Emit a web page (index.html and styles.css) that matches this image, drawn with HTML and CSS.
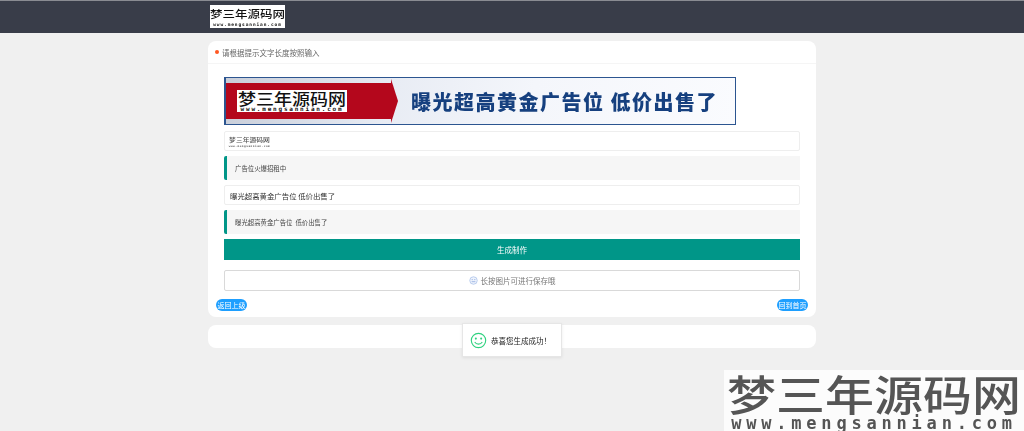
FILE: index.html
```html
<!DOCTYPE html>
<html lang="zh">
<head>
<meta charset="utf-8">
<title>梦三年源码网</title>
<link rel="stylesheet" href="styles.css">
</head>
<body>
<header class="topbar">
  <div class="wrap">
    <div class="logo logo-top"><span class="logo-cn">梦三年源码网</span><span class="logo-en">www.mengsannian.com</span></div>
  </div>
</header>
<main class="wrap content">
  <section class="card">
    <div class="card-head"><i class="dot"></i>请根据提示文字长度按照输入</div>
    <div class="card-body">
      <div class="banner">
        <div class="ribbon">
          <div class="logo logo-banner"><span class="logo-cn">梦三年源码网</span><span class="logo-en">www.mengsannian.com</span></div>
          <svg class="ribbon-tip" viewBox="0 0 7 44" preserveAspectRatio="none"><polygon points="0,0 7,22 0,44" fill="#b4071c"/></svg>
        </div>
        <div class="slogan">曝光超高黄金广告位 低价出售了</div>
      </div>
      <div class="input">
        <div class="logo logo-field"><span class="logo-cn">梦三年源码网</span><span class="logo-en">www.mengsannian.com</span></div>
      </div>
      <div class="quote">广告位火爆招租中</div>
      <div class="input">曝光超高黄金广告位 低价出售了</div>
      <div class="quote">曝光超高黄金广告位&nbsp; 低价出售了</div>
      <button class="btn-primary">生成制作</button>
      <div class="btn-outline">
        <svg class="smile-sm" viewBox="0 0 12 12"><circle cx="6" cy="6" r="5" fill="#eef3fc" stroke="#a9c0ea"/><circle cx="4.200" cy="4.800" r=".7" fill="#8aa6dd"/><circle cx="7.800" cy="4.800" r=".7" fill="#8aa6dd"/><path d="M3.500 7.600h5" stroke="#8aa6dd" fill="none"/></svg>
        长按图片可进行保存哦
      </div>
    </div>
    <div class="pills"><a class="pill">返回上级</a><a class="pill">回到首页</a></div>
  </section>
  <section class="card card-empty"></section>
</main>
<div class="toast">
  <svg class="smile" viewBox="0 0 18 18"><circle cx="9" cy="9" r="7.600" fill="none" stroke="#2fd17f" stroke-width="1.200"/><circle cx="6.200" cy="7" r="1.100" fill="#2fd17f"/><circle cx="11.800" cy="7" r="1.100" fill="#2fd17f"/><path d="M5 10.600c1.800 3 6.200 3 8 0" fill="none" stroke="#2fd17f" stroke-width="1.200"/></svg>
  <span>恭喜您生成成功！</span>
</div>
<div class="logo watermark"><span class="logo-cn">梦三年源码网</span><span class="logo-en">www.mengsannian.com</span></div>
</body>
</html>
```

FILE: styles.css
```css
* { box-sizing: border-box; }
html, body { margin: 0; height: 431px; overflow: hidden; }
body {
  background: #f0f0f0;
  font-family: "Noto Sans CJK SC", "Liberation Sans", sans-serif;
  font-size: 7px;
  color: #444;
  filter: blur(.3px);
}
.wrap { width: 608px; margin-left: 208px; }
.topbar { height: 33px; background: #393d49; border-top: 1px solid #8a8c92; }
.topbar .wrap { padding: 4px 0 0 2px; }
.logo { display: flex; flex-direction: column; align-items: center; background: #fff; color: #111; }
.logo-cn { display: block; white-space: nowrap; font-weight: 500; transform: scaleY(.86); }
.logo-en { display: block; white-space: nowrap; font-family: "DejaVu Sans Mono", monospace; font-weight: 700; }
.logo-top { width: 75px; height: 23px; }
.logo-top .logo-cn { font-size: 12.500px; line-height: 17px; }
.logo-top .logo-en { font-size: 4.500px; line-height: 6px; letter-spacing: .9px; }
.content { padding-top: 8px; }
.card { background: #fff; border-radius: 8px; margin-bottom: 8px; }
.card-head { height: 23px; display: flex; align-items: center; padding-left: 7px; border-bottom: 1px solid #f5f5f5; font-size: 7.500px; color: #666; }
.dot { width: 4px; height: 4px; border-radius: 50%; background: #ff5722; margin-right: 3px; }
.card-body { padding: 13px 16px 0; display: flex; flex-direction: column; }
.banner { width: 512px; height: 48px; border: 1.500px solid #2c5590; border-left-width: 2px; background: linear-gradient(100deg, #c9ced9, #e8ecf4 32%, #f4f6fb 60%, #fafbfe); display: flex; align-items: center; margin-bottom: 6px; }
.ribbon { width: 165px; height: 36px; background: #b4071c; position: relative; display: flex; align-items: center; padding-left: 11px; }
.ribbon-tip { position: absolute; left: 100%; top: -4px; width: 7px; height: 44px; }
.logo-banner { width: 110px; height: 22px; }
.logo-banner .logo-cn { font-size: 18px; line-height: 16px; }
.logo-banner .logo-en { font-size: 6px; line-height: 6px; letter-spacing: 1.800px; }
.slogan { margin-left: 20px; font-size: 20px; letter-spacing: 1.500px; font-weight: 900; color: #16407f; white-space: nowrap; }
.input { height: 20px; border: 1px solid #eee; border-radius: 2px; background: #fff; padding-left: 5px; display: flex; align-items: center; font-size: 7.400px; color: #333; margin-bottom: 5px; }
.logo-field { width: 41px; height: 13px; color: #555; margin-left: -1px; }
.logo-field .logo-cn { font-size: 6.800px; line-height: 9px; }
.logo-field .logo-en { font-size: 2.800px; line-height: 4px; letter-spacing: .5px; }
.quote { height: 24px; background: #f6f6f6; border-left: 3px solid #009688; border-radius: 2px 0 0 2px; padding-left: 8px; display: flex; align-items: center; font-size: 6.400px; color: #444; margin-bottom: 5px; }
.btn-primary { height: 21px; border: 0; background: #009688; color: #fff; font: inherit; font-size: 7.500px; padding: 0; margin-bottom: 10px; }
.btn-outline { height: 21px; border: 1px solid #d9d9d9; border-radius: 2px; display: flex; align-items: center; justify-content: center; gap: 3px; font-size: 7.500px; color: #777; }
.smile-sm { width: 9px; height: 9px; }
.pills { display: flex; justify-content: space-between; padding: 8px 8px 6px; }
.pill { height: 12px; width: 31px; border-radius: 6px; background: #1e9fff; color: #fff; font-size: 7px; display: flex; align-items: center; justify-content: center; }
.card-empty { height: 23px; }
.toast { position: absolute; left: 462px; top: 323px; width: 100px; height: 34px; background: #fff; border: 1px solid #e6e6e6; box-shadow: 0 1px 3px rgba(0,0,0,.08); display: flex; align-items: center; padding-left: 7px; gap: 4px; font-size: 7.500px; color: #222; }
.smile { width: 17px; height: 17px; }
.watermark { position: absolute; left: 724px; top: 370px; width: 300px; height: 61px; background: rgba(255,255,255,.8); color: #555; }
.watermark .logo-cn { font-size: 49px; line-height: 45px; }
.watermark .logo-en { font-size: 17px; line-height: 16px; letter-spacing: 4.800px; }
```
